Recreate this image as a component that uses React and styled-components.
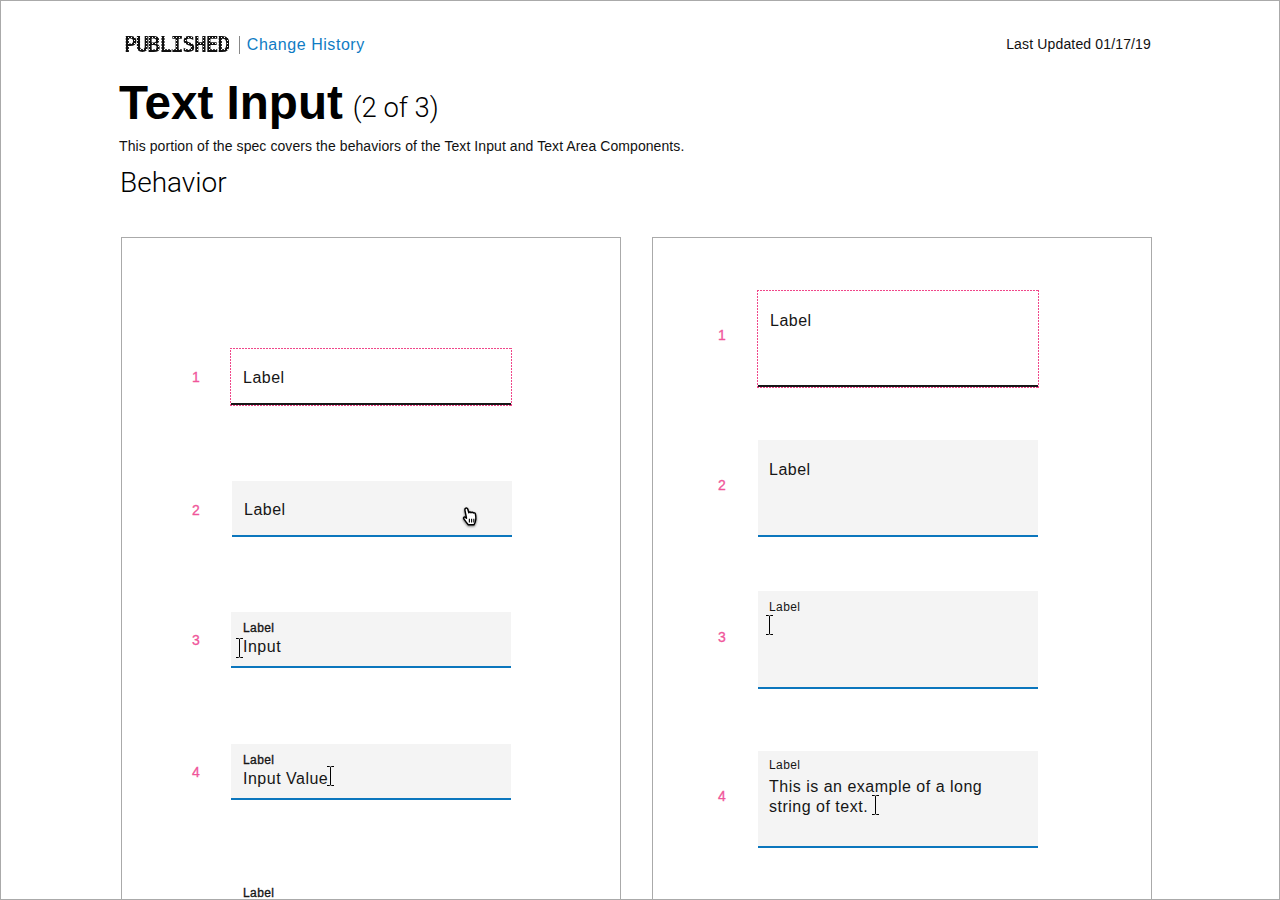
import React from "react";
import styled, { createGlobalStyle } from "styled-components";

const GlobalStyle = createGlobalStyle`
  html, body {
    margin: 0;
    padding: 0;
    background: #fff;
  }
  body {
    font-family: "Liberation Sans", Arial, sans-serif;
    color: #000;
  }
`;

const Page = styled.div`
  box-sizing: border-box;
  width: 1280px;
  height: 900px;
  border: 1px solid #aaa;
  overflow: hidden;
  padding: 35px 128px 0 118px;
`;

const TopBar = styled.div`
  display: flex;
  align-items: center;
  justify-content: space-between;
  height: 17px;
`;

const Status = styled.div`
  display: flex;
  align-items: center;
  padding-left: 5px;
`;

const Stamp = styled.span`
  font-family: "DejaVu Sans Mono", monospace;
  font-size: 22px;
  line-height: 17px;
  font-weight: 700;
  letter-spacing: -1.6px;
  color: transparent;
  background-color: #111;
  background-image: radial-gradient(#fff 0.7px, transparent 0.9px);
  background-size: 3px 3px;
  -webkit-background-clip: text;
  background-clip: text;
`;

const Divider = styled.span`
  width: 1px;
  height: 18px;
  background: #888;
  margin: 0 7px 0 10px;
`;

const HistoryLink = styled.a`
  font-size: 16px;
  letter-spacing: 0.55px;
  color: #0f7cc4;
  text-decoration: none;
`;

const Updated = styled.span`
  font-size: 14px;
  line-height: 15px;
  letter-spacing: 0.15px;
  color: #111;
`;

const Title = styled.h1`
  margin: 20px 0 0;
  font-size: 47.6px;
  line-height: 60px;
  font-weight: 700;
  display: flex;
  align-items: flex-end;
`;

const TitleNote = styled.span`
  font-family: Roboto, "Liberation Sans", sans-serif;
  font-size: 27.4px;
  line-height: 32px;
  font-weight: 300;
  margin: 0 0 9px 10px;
`;

const Intro = styled.p`
  margin: 4px 0 0;
  font-size: 14px;
  line-height: 18px;
  letter-spacing: 0.08px;
  color: #111;
`;

const SectionTitle = styled.h2`
  margin: 9px 0 0 1px;
  font-family: Roboto, "Liberation Sans", sans-serif;
  font-size: 28px;
  line-height: 38px;
  font-weight: 300;
`;

const Panels = styled.div`
  display: grid;
  grid-template-columns: 500px 500px;
  column-gap: 31px;
  margin: 35px 0 0 2px;
`;

const Panel = styled.section`
  box-sizing: border-box;
  height: 800px;
  border: 1px solid #aaa;
  padding: ${(p) => p.$top}px 0 0 ${(p) => p.$left}px;
  display: flex;
  flex-direction: column;
  gap: ${(p) => p.$gap}px;
`;

const Row = styled.div`
  display: flex;
  align-items: center;
  margin-top: ${(p) => p.$mt || 0}px;
`;

const Num = styled.span`
  width: ${(p) => p.$w}px;
  font-size: 14px;
  line-height: 16px;
  color: #f0559a;
  -webkit-text-stroke: 0.3px #f0559a;
  margin-bottom: ${(p) => p.$lift || 0}px;
`;

const Field = styled.div`
  position: relative;
  box-sizing: border-box;
  width: 280px;
  height: ${(p) => p.$h}px;
  margin-left: ${(p) => p.$shift || 0}px;
  padding: ${(p) => p.$pt}px 0 0 ${(p) => p.$pl || 12}px;
  background: ${(p) => (p.$plain ? "#fff" : "#f4f4f4")};
  border-bottom: 2px solid ${(p) => (p.$plain ? "#171717" : "#0b76bd")};
`;

/* dash is 2 on 1 off, a css dotted border comes out too faint */
const Redline = styled.span`
  position: absolute;
  inset: 0 -1px -3px -1px;
  background:
    repeating-linear-gradient(90deg, #f0478a 0 2px, transparent 2px 3px) top / 100% 1px no-repeat,
    repeating-linear-gradient(90deg, #f0478a 0 2px, transparent 2px 3px) bottom / 100% 1px no-repeat,
    repeating-linear-gradient(0deg, #f0478a 0 2px, transparent 2px 3px) left / 1px 100% no-repeat,
    repeating-linear-gradient(0deg, #f0478a 0 2px, transparent 2px 3px) right / 1px 100% no-repeat;
`;

const Small = styled.div`
  font-size: 12px;
  line-height: 16px;
  letter-spacing: 0.4px;
  color: #161616;
  -webkit-text-stroke: ${(p) => (p.$heavy ? "0.35px" : "0")} #161616;
  margin-bottom: ${(p) => p.$mb || 0}px;
`;

const Value = styled.div`
  font-size: 16px;
  line-height: 20px;
  letter-spacing: 0.5px;
  color: #161616;
`;

const Spot = styled.svg`
  position: absolute;
  left: ${(p) => p.$x}px;
  top: ${(p) => p.$y}px;
  overflow: visible;
`;

const LooseLabel = styled.div`
  padding-left: 51px;
  margin-top: 9px;
`;

// i-beam text cursor
const Beam = ({ x, y }) => (
  <Spot $x={x} $y={y} width="7" height="20" viewBox="0 0 7 20" fill="none" stroke="#000" strokeWidth="1">
    <path d="M0 .5h2.5c.5 0 1 .5 1 1v17c0 .5-.5 1-1 1H0M7 .5H4.5c-.5 0-1 .5-1 1v17c0 .5.5 1 1 1H7" />
  </Spot>
);

// pointer hand, the mac one
const Hand = ({ x, y }) => (
  <Spot
    $x={x}
    $y={y}
    width="17"
    height="20"
    viewBox="0 0 15 18"
    style={{ filter: "drop-shadow(0 1px 1px rgba(0,0,0,.55))" }}
  >
    <path
      d="M3 1.2c.8-.6 1.7-.2 2 .6l1 3.4c.2-.9 1.7-1 2 0 .3-.7 1.6-.8 2 .2.5-.4 1.7-.2 1.9.8.3 1.4.5 3 .4 4.6-.1 2.200-.8 3.800-1.700 5.200H5.500C4 14.400 2.600 12.300 1.400 10.600.900 9.800 1.600 8.700 2.600 9.100l1.300 1L2.500 3c-.2-.7 0-1.400.5-1.800z"
      fill="#fff"
      stroke="#000"
      strokeWidth="1.300"
      strokeLinejoin="round"
    />
    <path d="M6.500 10.500v3.500M8.500 10.500v3.500M10.500 10.500v3.500" stroke="#000" strokeWidth="1" />
  </Spot>
);

export default function App() {
  return (
    <>
      <GlobalStyle />
      <Page>
        <TopBar>
          <Status>
            <Stamp>PUBLISHED</Stamp>
            <Divider />
            <HistoryLink href="#">Change History</HistoryLink>
          </Status>
          <Updated>Last Updated 01/17/19</Updated>
        </TopBar>
        <Title>
          Text Input
          <TitleNote>(2 of 3)</TitleNote>
        </Title>
        <Intro>This portion of the spec covers the behaviors of the Text Input and Text Area Components.</Intro>
        <SectionTitle>Behavior</SectionTitle>
        <Panels>
          <Panel $top={110} $left={70} $gap={76}>
            <Row>
              <Num $w={39}>1</Num>
              <Field $plain $h={57} $pt={20}>
                <Value>Label</Value>
                <Redline />
              </Field>
            </Row>
            <Row>
              <Num $w={39} $lift={-2}>2</Num>
              <Field $h={56} $pt={19} $shift={1}>
                <Value>Label</Value>
                <Hand x={230} y={26} />
              </Field>
            </Row>
            <Row $mt={-1}>
              <Num $w={39}>3</Num>
              <Field $h={56} $pt={8}>
                <Small $heavy $mb={1}>Label</Small>
                <Value>Input</Value>
                <Beam x={5} y={26} />
              </Field>
            </Row>
            <Row>
              <Num $w={39}>4</Num>
              <Field $h={56} $pt={8}>
                <Small $heavy $mb={1}>Label</Small>
                <Value>Input Value</Value>
                <Beam x={96} y={22} />
              </Field>
            </Row>
            <LooseLabel>
              <Small $heavy>Label</Small>
            </LooseLabel>
          </Panel>
          <Panel $top={52} $left={65} $gap={53}>
            <Row>
              <Num $w={40} $lift={8}>1</Num>
              <Field $plain $h={97} $pt={21}>
                <Value>Label</Value>
                <Redline />
              </Field>
            </Row>
            <Row>
              <Num $w={40} $lift={8}>2</Num>
              <Field $h={97} $pt={20} $pl={11}>
                <Value>Label</Value>
              </Field>
            </Row>
            <Row $mt={1}>
              <Num $w={40} $lift={6}>3</Num>
              <Field $h={98} $pt={8} $pl={11}>
                <Small>Label</Small>
                <Beam x={8} y={24} />
              </Field>
            </Row>
            <Row $mt={9}>
              <Num $w={40} $lift={8}>4</Num>
              <Field $h={97} $pt={6} $pl={11}>
                <Small $mb={4}>Label</Small>
                <Value>
                  This is an example of a long
                  <br />
                  string of text.
                </Value>
                <Beam x={114} y={44} />
              </Field>
            </Row>
          </Panel>
        </Panels>
      </Page>
    </>
  );
}
